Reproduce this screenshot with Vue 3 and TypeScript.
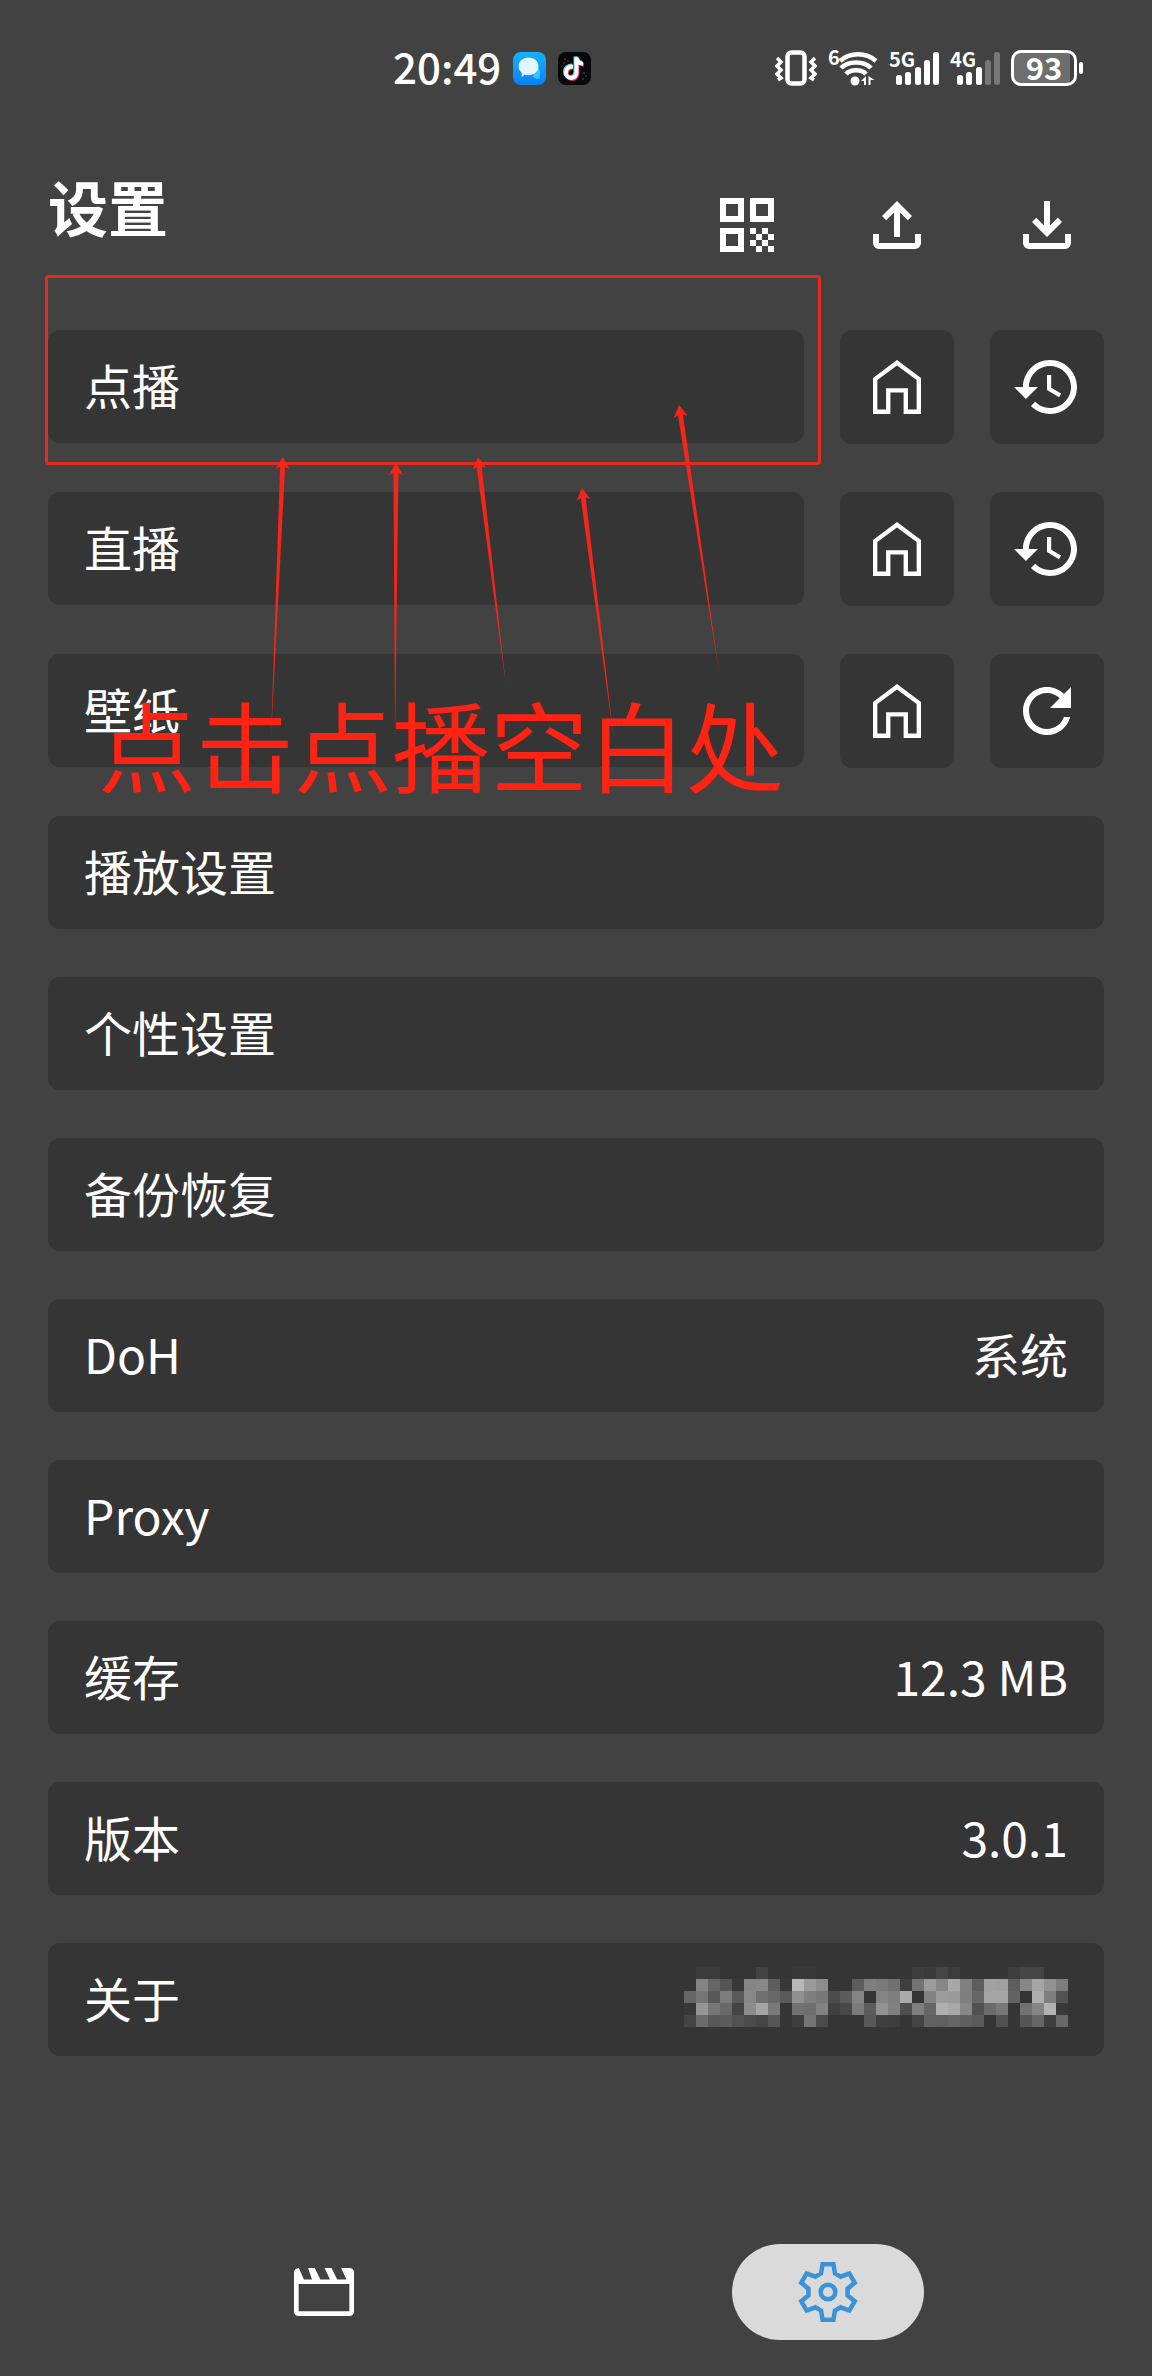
<script setup lang="ts">
interface SourceRow {
  label: string
  action: 'history' | 'refresh'
  actionLabel: string
}

interface SettingRow {
  label: string
  value?: string
  masked?: boolean
}

interface Arrow {
  tip: [number, number]
  tail: [number, number]
}

const sources: SourceRow[] = [
  { label: '点播', action: 'history', actionLabel: '点播历史' },
  { label: '直播', action: 'history', actionLabel: '直播历史' },
  { label: '壁纸', action: 'refresh', actionLabel: '刷新壁纸' },
]

const settings: SettingRow[] = [
  { label: '播放设置' },
  { label: '个性设置' },
  { label: '备份恢复' },
  { label: 'DoH', value: '系统' },
  { label: 'Proxy' },
  { label: '缓存', value: '12.3 MB' },
  { label: '版本', value: '3.0.1' },
  { label: '关于', masked: true },
]

const actionPaths: Record<SourceRow['action'], string> = {
  history:
    'M13 3c-4.97 0-9 4.03-9 9H1l3.89 3.89.07.14L9 12H6c0-3.87 3.13-7 7-7s7 3.13 7 7-3.13 7-7 7c-1.93 0-3.68-.79-4.94-2.06l-1.42 1.42C8.27 19.99 10.51 21 13 21c4.97 0 9-4.03 9-9s-4.03-9-9-9zm-1 5v5l4 2.4.72-1.21-3.32-1.98V8H12z',
  refresh:
    'M17.65 6.35C16.2 4.9 14.21 4 12 4c-4.42 0-7.99 3.58-7.99 8s3.57 8 7.99 8c3.73 0 6.84-2.55 7.73-6h-2.08c-.82 2.33-3.04 4-5.65 4-3.31 0-6-2.69-6-6s2.69-6 6-6c1.66 0 3.14.69 4.22 1.78L13 11h7V4l-2.35 2.35z',
}

// Mosaic over the masked value: one hex pair per cell, the grey level of that cell.
const mosaicRows: string[] = [
  '353b3b353535433535383835353535353535353e3a453c353535353e45453535',
  '358566553885885d38b89b8c35355c7f7a703e739c87a8805ea2a05d87a5927c',
  '6675587c5a88706859907f774b5c8435847faa34829c9a7f66a4a46334ae7f52',
  '38957668448ca47a35726e8240497b5c92804e7f66b0a888506b78347285b238',
  '446b575c524b4556353d744b353535583f3d35446260665f5b35503555663e68',
]
const mosaic = mosaicRows.flatMap((row, y) =>
  (row.match(/../g) ?? []).map((level, x) => ({ x: x * 12, y: y * 12, fill: `#${level}${level}${level}` })),
)

const arrows: Arrow[] = [
  { tip: [283, 457], tail: [271, 738] },
  { tip: [396, 463], tail: [395, 738] },
  { tip: [478, 457], tail: [506, 686] },
  { tip: [582, 488], tail: [614, 740] },
  { tip: [679, 405], tail: [719, 672] },
]

// A tapered shaft that ends in a barbed head.
function arrowPoints({ tip, tail }: Arrow): string {
  const dx = tail[0] - tip[0]
  const dy = tail[1] - tip[1]
  const length = Math.hypot(dx, dy)
  const ux = dx / length
  const uy = dy / length
  const at = (along: number, side: number) =>
    `${(tip[0] + ux * along - uy * side).toFixed(1)},${(tip[1] + uy * along + ux * side).toFixed(1)}`
  return [at(0, 0), at(12, 7), at(10, 2.5), at(length, 0), at(10, -2.5), at(12, -7)].join(' ')
}

function gearPoints(): string {
  const tooth: [number, number][] = [[-2.3, -6.2], [-1.8, -9.25], [1.8, -9.25], [2.3, -6.2]]
  const points: string[] = []
  for (let i = 0; i < 6; i++) {
    const angle = (i * Math.PI) / 3
    for (const [x, y] of tooth) {
      const px = 12 + x * Math.cos(angle) - y * Math.sin(angle)
      const py = 12 + x * Math.sin(angle) + y * Math.cos(angle)
      points.push(`${px.toFixed(2)},${py.toFixed(2)}`)
    }
  }
  return points.join(' ')
}

const bars = [
  { x: 7, y: 25, h: 10 },
  { x: 16, y: 22, h: 13 },
  { x: 26, y: 17, h: 18 },
  { x: 35, y: 10, h: 25 },
  { x: 44, y: 2, h: 33 },
]
const signals = [
  { name: '5G', full: 5 },
  { name: '4G', full: 3 },
]
</script>

<template>
  <div class="screen">
    <div class="status">
      <div class="status-left">
        <time class="clock">20:49</time>
        <svg class="app-icon" viewBox="0 0 33 33" aria-hidden="true">
          <defs>
            <linearGradient id="chat" x1="0" y1="0" x2="0" y2="1">
              <stop offset="0" stop-color="#12b4fb" />
              <stop offset="1" stop-color="#0a80f6" />
            </linearGradient>
          </defs>
          <rect width="33" height="33" rx="8" fill="url(#chat)" />
          <path d="M20 24.5c4 1 6-1 6.800-2.500V26.500c-2 .6-5 .4-6.800-2z M24 15a6 6 0 0 1 2 9l-6 1z" fill="#3cc3fc" />
          <path d="M15.500 5.500c5.800 0 10 3.700 10 8.800s-4.200 8.900-10 8.900c-1.500 0-2.800-.2-4-.6-1 1.600-2.200 2.300-3.300 2.200.6-1 .8-2.300.5-3.800-2-1.700-3-4-3-6.700 0-5.100 4-8.800 9.800-8.800z" fill="#e4f6ff" />
        </svg>
        <svg class="app-icon" viewBox="0 0 33 33" aria-hidden="true">
          <rect width="33" height="33" rx="8" fill="#07080d" />
          <g fill="none" stroke-width="4">
            <path d="M15 14.500c-4 0-7 2.400-7 6s2.400 5.500 5.300 5.500 5.200-2.200 5.200-5.500V5.500c.5 4 3 6 6.500 6.300" stroke="#5fd3d0" transform="translate(-1 -1)" />
            <path d="M15 14.500c-4 0-7 2.400-7 6s2.400 5.500 5.300 5.500 5.200-2.200 5.200-5.500V5.500c.5 4 3 6 6.500 6.300" stroke="#d9304f" transform="translate(1 1)" />
            <path d="M15 14.500c-4 0-7 2.400-7 6s2.400 5.500 5.300 5.500 5.200-2.200 5.200-5.500V5.500c.5 4 3 6 6.500 6.300" stroke="#fff" />
          </g>
          <g fill="#5b1f38"><circle cx="7" cy="7" r="1" /><circle cx="10" cy="9" r="1" /><circle cx="6" cy="11" r="1" /></g>
          <g fill="#1c3c63"><circle cx="26" cy="21" r="1" /><circle cx="28" cy="24" r="1" /><circle cx="25" cy="27" r="1" /></g>
        </svg>
      </div>

      <div class="status-right">
        <svg class="vibrate" viewBox="0 0 42 36" aria-hidden="true">
          <g fill="none" stroke="#fff">
            <rect x="12.500" y="2.500" width="17" height="31" rx="4" stroke-width="4.500" />
            <path d="M2 8l4 4-4 4 4 4-4 4 4 4-3 2M40 8l-4 4 4 4-4 4 4 4-4 4 3 2" stroke-width="3.500" />
          </g>
        </svg>
        <div class="wifi">
          <span class="wifi-gen">6</span>
          <svg viewBox="0 0 50 36" aria-hidden="true">
            <g fill="none" stroke="#fff" stroke-width="4.500">
              <path d="M12 11c10-9 26-9 36 0" />
              <path d="M13 18c7-7.500 23-7.500 30 0" />
              <path d="M18 24c4-5 16-5 20 0" />
            </g>
            <circle cx="27" cy="31" r="4.500" fill="#fff" />
            <path d="M38 26v9h-2v-4h-3zM40.500 26l6 4h-4v5h-2z" fill="#fff" />
          </svg>
        </div>
        <div v-for="signal in signals" :key="signal.name" class="signal">
          <span class="signal-name">{{ signal.name }}</span>
          <svg viewBox="0 0 50 36" aria-hidden="true">
            <rect
              v-for="(bar, i) in bars"
              :key="i"
              :x="bar.x"
              :y="bar.y"
              width="6"
              :height="bar.h"
              rx="2.500"
              :fill="i < signal.full ? '#fff' : '#777'"
            />
          </svg>
        </div>
        <div class="battery"><span class="battery-level">93</span></div>
      </div>
    </div>

    <header class="header">
      <h1>设置</h1>
      <div class="header-actions">
        <button type="button" aria-label="二维码">
          <svg class="icon" viewBox="0 0 24 24">
            <path
              fill-rule="evenodd"
              d="M3 3h8v8H3zM5 5v4h4V5zM13 3h8v8h-8zM15 5v4h4V5zM3 13h8v8H3zM5 15v4h4v-4zM13 13h2v2h-2zM17 13h2v2h-2zM15 15h2v2h-2zM19 15h2v2h-2zM13 17h2v2h-2zM17 17h2v2h-2zM15 19h2v2h-2zM19 19h2v2h-2z"
            />
          </svg>
        </button>
        <button type="button" aria-label="上传">
          <svg class="icon" viewBox="0 0 24 24">
            <path d="M11 16V7.850l-2.600 2.600L7 9l5-5 5 5-1.400 1.450-2.600-2.600V16zM6 20q-.825 0-1.412-.587Q4 18.825 4 18v-3h2v3h12v-3h2v3q0 .825-.587 1.413Q18.825 20 18 20z" />
          </svg>
        </button>
        <button type="button" aria-label="下载">
          <svg class="icon" viewBox="0 0 24 24">
            <path d="M12 16l-5-5 1.400-1.450 2.600 2.600V4h2v8.150l2.600-2.600L17 11zM6 20q-.825 0-1.412-.587Q4 18.825 4 18v-3h2v3h12v-3h2v3q0 .825-.587 1.413Q18.825 20 18 20z" />
          </svg>
        </button>
      </div>
    </header>

    <main class="settings">
      <div v-for="source in sources" :key="source.label" class="source">
        <button type="button" class="card">{{ source.label }}</button>
        <button type="button" class="tile" :aria-label="`${source.label}主页`">
          <svg class="icon" viewBox="0 0 24 24">
            <path
              fill-rule="evenodd"
              d="M4 21V9l8-6 8 6v12h-5.800v-7.200H9.800V21zM5.450 19.500h2.900v-7.100h7.300v7.100h2.900V9.700L12 4.800 5.450 9.700z"
            />
          </svg>
        </button>
        <button type="button" class="tile" :aria-label="source.actionLabel">
          <svg class="icon" viewBox="0 0 24 24"><path :d="actionPaths[source.action]" /></svg>
        </button>
      </div>

      <button v-for="row in settings" :key="row.label" type="button" class="card">
        <span>{{ row.label }}</span>
        <span v-if="row.value">{{ row.value }}</span>
        <svg v-if="row.masked" class="mosaic" viewBox="0 0 384 60" shape-rendering="crispEdges" aria-hidden="true">
          <rect v-for="(cell, i) in mosaic" :key="i" :x="cell.x" :y="cell.y" width="12" height="12" :fill="cell.fill" />
        </svg>
      </button>

      <div class="notes">
        <div class="note-frame"></div>
        <svg class="note-arrows" viewBox="0 261 1152 600" aria-hidden="true">
          <polygon v-for="(arrow, i) in arrows" :key="i" :points="arrowPoints(arrow)" />
        </svg>
        <p class="note-text">点击点播空白处</p>
      </div>
    </main>

    <nav class="nav">
      <button type="button" class="nav-item" aria-label="影视">
        <svg class="icon" viewBox="0 0 24 24">
          <path
            fill-rule="evenodd"
            d="M3.600 4Q2 4.200 2 5.700V18.400Q2 20 3.600 20H20.400Q22 20 22 18.400V5.600Q22 4 20.400 4H17.700L19.500 7.800H16.400L14.500 4H12.200L14 7.800H10.800L8.900 4H6.700L8 7.800H5.300zM3.550 9.300H20.450V18.400H3.550z"
          />
        </svg>
      </button>
      <button type="button" class="nav-item active" aria-label="设置" aria-current="page">
        <svg class="icon" viewBox="0 0 24 24">
          <g fill="none" stroke="#3a92d8" stroke-width="1.500">
            <polygon :points="gearPoints()" />
            <circle cx="12" cy="12" r="2.450" />
          </g>
        </svg>
      </button>
    </nav>
  </div>
</template>

<style>
body {
  margin: 0;
  background: #424242;
}
</style>

<style scoped>
.screen {
  display: flex;
  flex-direction: column;
  min-height: 100vh;
  background: #424242;
  color: #fff;
  font-family: "Noto Sans CJK SC", "Noto Sans", sans-serif;
}

button {
  margin: 0;
  padding: 0;
  border: 0;
  background: none;
  color: inherit;
  font: inherit;
  cursor: pointer;
}

.icon {
  display: block;
  width: 72px;
  height: 72px;
  fill: #fff;
}

.status {
  display: flex;
  justify-content: space-between;
  align-items: center;
  height: 136px;
  padding: 0 68px 0 393px;
}

.status-left,
.status-right {
  display: flex;
  align-items: center;
}

.status-left {
  gap: 12px;
}

.status-right {
  gap: 11px;
}

.clock {
  padding-bottom: 5px;
  font-size: 42px;
  line-height: 48px;
  font-weight: 500;
}

.app-icon {
  width: 33px;
  height: 33px;
}

.vibrate {
  width: 42px;
  height: 36px;
}

.wifi,
.signal {
  position: relative;
  width: 50px;
  height: 36px;
}

.wifi svg,
.signal svg {
  display: block;
  width: 50px;
  height: 36px;
}

.wifi-gen,
.signal-name {
  position: absolute;
  left: 0;
  top: -1px;
  font-size: 20px;
  line-height: 20px;
  font-weight: 700;
}

.wifi-gen {
  top: -3px;
}

.battery {
  position: relative;
  box-sizing: border-box;
  display: flex;
  align-items: center;
  justify-content: center;
  width: 66px;
  height: 36px;
  margin-right: 7px;
  padding-bottom: 3px;
  border: 3px solid #fff;
  border-radius: 10px;
  background: linear-gradient(90deg, #6e6e6e 93%, #424242 93%);
}

.battery::after {
  content: "";
  position: absolute;
  left: 65px;
  top: 9px;
  width: 4px;
  height: 12px;
  border-radius: 2px;
  background: #fff;
}

.battery-level {
  font-size: 31px;
  line-height: 30px;
  font-weight: 700;
}

.header {
  display: flex;
  justify-content: space-between;
  align-items: flex-start;
  padding: 34px 48px 0;
}

.header h1 {
  margin: 0;
  font-size: 60px;
  line-height: 72px;
  font-weight: 700;
}

.header-actions {
  display: flex;
  gap: 36px;
  margin-top: 19px;
}

.header-actions button {
  display: flex;
  justify-content: center;
  width: 114px;
}

.settings {
  position: relative;
  display: flex;
  flex-direction: column;
  gap: 48px;
  padding: 69px 48px 48px;
}

.source {
  display: flex;
  align-items: flex-start;
  gap: 36px;
}

.source .card {
  flex: 1;
}

.card {
  box-sizing: border-box;
  display: flex;
  align-items: center;
  justify-content: space-between;
  min-height: 113px;
  padding: 0 36px 5px;
  border-radius: 12px;
  background: #353535;
  font-size: 48px;
  line-height: 72px;
  text-align: left;
}

.tile {
  display: flex;
  align-items: center;
  justify-content: center;
  width: 114px;
  height: 114px;
  border-radius: 12px;
  background: #353535;
}

.mosaic {
  width: 384px;
  height: 60px;
}

.notes {
  position: absolute;
  inset: 0;
  overflow: hidden;
  pointer-events: none;
}

.note-frame {
  position: absolute;
  box-sizing: border-box;
  left: 45px;
  right: 331px;
  top: 14px;
  height: 190px;
  border: 3px solid #e32c20;
  border-radius: 4px;
}

.note-arrows {
  position: absolute;
  left: 0;
  top: 0;
  width: 1152px;
  height: 600px;
  fill: #f5251a;
}

.note-text {
  position: absolute;
  left: 98px;
  top: 432px;
  margin: 0;
  color: #ff2314;
  font-size: 98px;
  line-height: 98px;
  white-space: nowrap;
}

.nav {
  display: flex;
  margin-top: auto;
  padding: 0 72px 36px;
}

.nav-item {
  display: flex;
  align-items: center;
  justify-content: center;
  width: 192px;
  height: 96px;
  margin: 0 auto;
  border-radius: 48px;
}

.nav-item.active {
  background: #dadada;
}
</style>
